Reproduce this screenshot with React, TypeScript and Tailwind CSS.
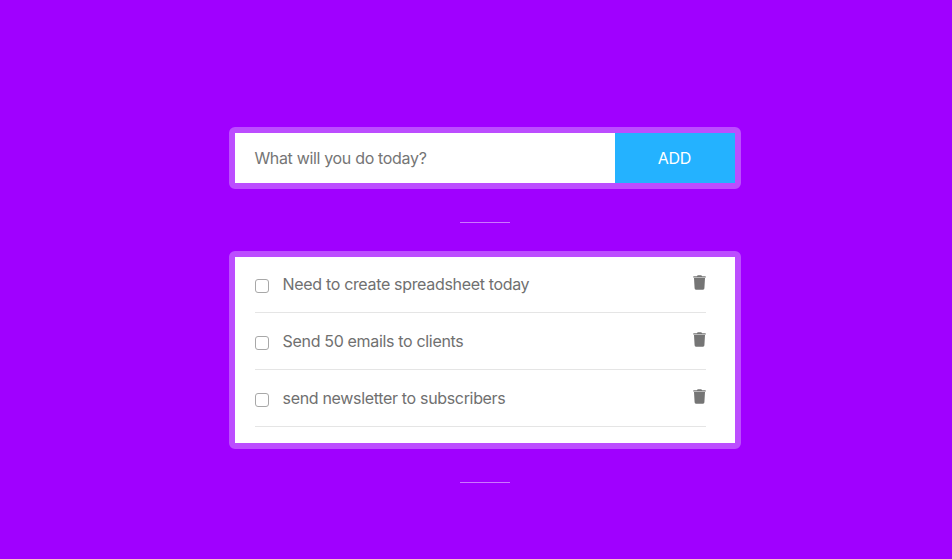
const tasks = ['Need to create spreadsheet today', 'Send 50 emails to clients', 'send newsletter to subscribers'];

function Divider() {
  return <div className="h-px w-[50px] bg-[#cc77ff]" />;
}

function TrashIcon() {
  return (
    <svg width="13" height="15" viewBox="0 0 13 15" fill="#757575" className="mt-[18px] shrink-0">
      <path d="M4.2.7Q4.4.3 4.9.3h3.2q.5 0 .7.4l.4.6h3.1q.5 0 .5.5v.8H.2v-.8q0-.5.5-.5h3.1z" />
      <path d="M1 3.1h11l-.6 10.2a1.4 1.4 0 0 1-1.4 1.4H3a1.4 1.4 0 0 1-1.4-1.4z" />
    </svg>
  );
}

export default function App() {
  return (
    <main className="flex h-[559px] w-[952px] flex-col items-center bg-[#a000ff] pt-[127px] pl-[18px] font-[Inter,sans-serif] text-[16px] tracking-[-0.33px]">
      <form className="flex h-[62px] w-[512px] rounded-md border-6 border-[#bc4dff]" onSubmit={(e) => e.preventDefault()}>
        <input
          className="w-[380px] bg-white pr-5 pl-[19.4px] text-[#666] outline-none placeholder:text-[#757575]"
          placeholder="What will you do today?"
        />
        <button className="w-[120px] bg-[#24b2ff] pr-[1.4px] text-white">ADD</button>
      </form>
      <div className="mt-[33px]">
        <Divider />
      </div>
      <section className="mt-[28px] h-[198px] w-[512px] rounded-md border-6 border-[#bc4dff]">
        <ul className="h-full bg-white pr-[29px] pl-[20px]">
          {tasks.map((task) => (
            <li key={task} className="flex h-[57px] border-b border-[#e5e5e5] pt-px first:h-[56px] first:pt-0">
              <input type="checkbox" className="mt-[22px] h-[14px] w-[14px] shrink-0 appearance-none rounded-[3px] border border-[#a8a8a8] bg-white" />
              <span className="mt-[15px] ml-[13.6px] flex-1 text-[#707070]">{task}</span>
              <TrashIcon />
            </li>
          ))}
        </ul>
      </section>
      <div className="mt-[33px]">
        <Divider />
      </div>
    </main>
  );
}
